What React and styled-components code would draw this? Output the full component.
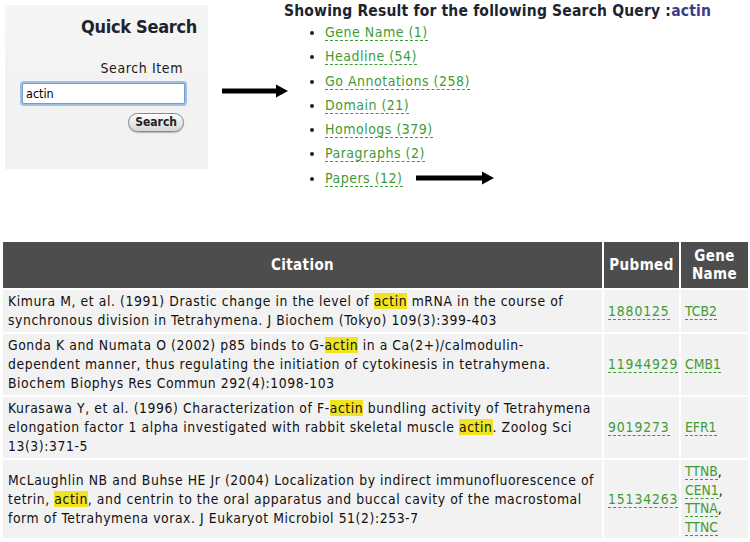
import React from "react";
import styled, { createGlobalStyle } from "styled-components";

const Global = createGlobalStyle`
  body {
    margin: 0;
    background: #fff;
    font-family: "DejaVu Sans Condensed", "DejaVu Sans", sans-serif;
    color: #111;
  }
`;

const results = [
  "Gene Name (1)",
  "Headline (54)",
  "Go Annotations (258)",
  "Domain (21)",
  "Homologs (379)",
  "Paragraphs (2)",
  "Papers (12)",
];

const rows = [
  {
    citation: ["Kimura M, et al. (1991) Drastic change in the level of ", "actin", " mRNA in the course of synchronous division in Tetrahymena. J Biochem (Tokyo) 109(3):399-403"],
    pubmed: "1880125",
    genes: ["TCB2"],
  },
  {
    citation: ["Gonda K and Numata O (2002) p85 binds to G-", "actin", " in a Ca(2+)/calmodulin-dependent manner, thus regulating the initiation of cytokinesis in tetrahymena. Biochem Biophys Res Commun 292(4):1098-103"],
    pubmed: "11944929",
    genes: ["CMB1"],
  },
  {
    citation: ["Kurasawa Y, et al. (1996) Characterization of F-", "actin", " bundling activity of Tetrahymena elongation factor 1 alpha investigated with rabbit skeletal muscle ", "actin", ". Zoolog Sci 13(3):371-5"],
    pubmed: "9019273",
    genes: ["EFR1"],
  },
  {
    citation: ["McLaughlin NB and Buhse HE Jr (2004) Localization by indirect immunofluorescence of tetrin, ", "actin", ", and centrin to the oral apparatus and buccal cavity of the macrostomal form of Tetrahymena vorax. J Eukaryot Microbiol 51(2):253-7"],
    pubmed: "15134263",
    genes: ["TTNB", "CEN1", "TTNA", "TTNC"],
  },
];

function Arrow({ width }) {
  return (
    <svg width={width} height="16" viewBox={`0 0 ${width} 16`}>
      <rect x="0" y="5.5" width={width - 10} height="5" fill="#000" />
      <path d={`M${width - 12} 1.5 L${width} 8 L${width - 12} 14.5 Z`} fill="#000" />
    </svg>
  );
}

export default function App() {
  return (
    <>
      <Global />
      <Top>
        <SearchPanel>
          <PanelTitle>Quick Search</PanelTitle>
          <FieldLabel>Search Item</FieldLabel>
          <Input defaultValue="actin" />
          <ButtonRow>
            <SearchButton>Search</SearchButton>
          </ButtonRow>
        </SearchPanel>
        <ArrowSlot>
          <Arrow width={66} />
        </ArrowSlot>
        <Results>
          <ResultTitle>
            Showing Result for the following Search Query :<Query>actin</Query>
          </ResultTitle>
          <List>
            {results.map((r, i) => (
              <Item key={r}>
                <Link>{r}</Link>
                {i === results.length - 1 && (
                  <TailArrow>
                    <Arrow width={78} />
                  </TailArrow>
                )}
              </Item>
            ))}
          </List>
        </Results>
      </Top>
      <Table>
        <colgroup>
          <col style={{ width: 599 }} />
          <col style={{ width: 75 }} />
          <col style={{ width: 67 }} />
        </colgroup>
        <thead>
          <tr>
            <Th>Citation</Th>
            <Th>Pubmed</Th>
            <Th>
              Gene
              <br />
              Name
            </Th>
          </tr>
        </thead>
        <tbody>
          {rows.map((row) => (
            <tr key={row.pubmed}>
              <CitationTd>
                {row.citation.map((part, i) =>
                  i % 2 === 1 ? <Mark key={i}>{part}</Mark> : <span key={i}>{part}</span>
                )}
              </CitationTd>
              <PubmedTd>
                <Link>{row.pubmed}</Link>
              </PubmedTd>
              <GeneTd>
                {row.genes.map((g, i) => (
                  <React.Fragment key={g}>
                    <Link>{g}</Link>
                    {i < row.genes.length - 1 && ","}
                    {i < row.genes.length - 1 && <br />}
                  </React.Fragment>
                ))}
              </GeneTd>
            </tr>
          ))}
        </tbody>
      </Table>
    </>
  );
}

const Top = styled.div`
  display: flex;
  align-items: flex-start;
  padding: 5px 0 0 5px;
  height: 240px;
  box-sizing: border-box;
`;

const SearchPanel = styled.div`
  width: 203px;
  height: 164px;
  box-sizing: border-box;
  background: linear-gradient(#f5f5f5, #f3f2f2 60%, #f2f1f1);
  padding: 11px 11px 0 17px;
  display: flex;
  flex-direction: column;
  align-items: flex-end;
`;

const PanelTitle = styled.div`
  font-size: 18px;
  font-weight: bold;
  letter-spacing: -0.3px;
  color: #1c2430;
  line-height: 22px;
`;

const FieldLabel = styled.div`
  margin-top: 21px;
  font-size: 14px;
  letter-spacing: 0.6px;
  line-height: 18px;
  padding-right: 14px;
  color: #1a1a1a;
`;

const Input = styled.input`
  align-self: stretch;
  margin: 6px 12px 0 0;
  height: 21px;
  box-sizing: border-box;
  border: 1px solid #7a9cc8;
  box-shadow: 0 0 0 2px #9fc0e6;
  border-radius: 2px;
  font-family: inherit;
  font-size: 12.5px;
  padding: 0 3px;
  color: #000;
  outline: none;
`;

const ButtonRow = styled.div`
  margin-top: 7px;
  padding-right: 13px;
`;

const SearchButton = styled.button`
  height: 19px;
  padding: 0 6px;
  border: 1px solid #8a8a8a;
  border-radius: 10px;
  background: linear-gradient(#ffffff, #e9e9e9 50%, #d6d6d6);
  box-shadow: 0 1px 1px rgba(0, 0, 0, 0.25);
  font-family: inherit;
  font-size: 12px;
  font-weight: bold;
  color: #222;
  line-height: 17px;
`;

const ArrowSlot = styled.div`
  margin: 78px 0 0 14px;
  display: flex;
`;

const Results = styled.div`
  margin-left: -4px;
`;

const ResultTitle = styled.div`
  font-size: 15.5px;
  font-weight: bold;
  letter-spacing: 0.18px;
  color: #1c2430;
  line-height: 18px;
  margin-top: -3px;
`;

const Query = styled.span`
  color: #3a3c8c;
`;

const List = styled.ul`
  margin: 0;
  padding-left: 41px;
  font-size: 14px;
  letter-spacing: 0.5px;
  line-height: 24.3px;
`;

const Item = styled.li`
  color: #222;
`;

const Link = styled.span`
  color: #3f9b36;
  border-bottom: 1px dashed #3f9b36;
  line-height: 1;
`;

const TailArrow = styled.span`
  display: inline-block;
  margin-left: 13px;
  vertical-align: -3px;
`;

const Table = styled.table`
  margin-left: 1px;
  width: 749px;
  border-collapse: separate;
  border-spacing: 2px;
  table-layout: fixed;
  font-size: 13.8px;
`;

const Th = styled.th`
  background: #4d4d4d;
  color: #fff;
  font-size: 15px;
  letter-spacing: 0.4px;
  font-weight: bold;
  height: 46px;
  padding: 0 2px;
  line-height: 18px;
  text-align: center;
`;

const Td = styled.td`
  background: #f2f2f2;
  padding: 2px 5px 2px;
  line-height: 19px;
  vertical-align: middle;
  color: #111;
`;

const CitationTd = styled(Td)`
  letter-spacing: 0.58px;
  padding-right: 7px;
`;

const PubmedTd = styled(Td)`
  padding: 2px 2px 2px 4px;
  letter-spacing: 0.9px;
`;

const GeneTd = styled(Td)`
  padding: 2px 2px 2px 4px;
  line-height: 18.5px;
`;

const Mark = styled.span`
  background: #f0e321;
`;
